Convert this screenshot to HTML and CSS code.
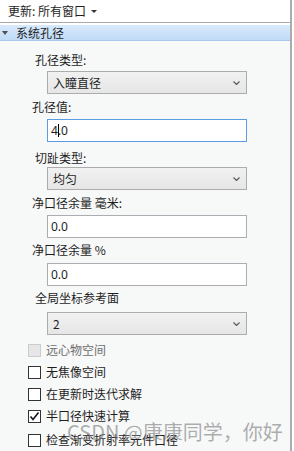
FILE: index.html
```html
<!DOCTYPE html>
<html lang="zh-CN">
<head>
<meta charset="utf-8">
<title>系统孔径</title>
<link rel="stylesheet" href="styles.css">
</head>
<body>
<div class="panel">
  <div class="topbar">
    <span class="topbar-text">更新: 所有窗口</span>
    <span class="dropdown-caret"></span>
  </div>
  <div class="section">
    <div class="section-header">
      <span class="header-tri"></span>
      <span class="header-title">系统孔径</span>
    </div>
    <div class="section-body">
      <div class="label indent">孔径类型:</div>
      <div class="field select gap-3">
        <span>入瞳直径</span>
        <svg class="chev" width="7" height="4" viewBox="0 0 7 4"><polyline points="0.5,0.5 3.5,3.5 6.5,0.5" fill="none" stroke="#5a5a5a" stroke-width="1.2"/></svg>
      </div>

      <div class="label gap-5">孔径值:</div>
      <div class="field input focused gap-4"><span>4</span><span class="cursor"></span><span>.0</span></div>

      <div class="label indent gap-8">切趾类型:</div>
      <div class="field select gap-1">
        <span>均匀</span>
        <svg class="chev" width="7" height="4" viewBox="0 0 7 4"><polyline points="0.5,0.5 3.5,3.5 6.5,0.5" fill="none" stroke="#5a5a5a" stroke-width="1.2"/></svg>
      </div>

      <div class="label gap-5">净口径余量 毫米:</div>
      <div class="field input gap-4"><span>0.0</span></div>

      <div class="label gap-4">净口径余量 %</div>
      <div class="field input gap-5"><span>0.0</span></div>

      <div class="label indent gap-4">全局坐标参考面</div>
      <div class="field select gap-6">
        <span>2</span>
        <svg class="chev" width="7" height="4" viewBox="0 0 7 4"><polyline points="0.5,0.5 3.5,3.5 6.5,0.5" fill="none" stroke="#5a5a5a" stroke-width="1.2"/></svg>
      </div>

      <div class="checks">
        <div class="check-row disabled"><span class="box"></span><span>远心物空间</span></div>
        <div class="check-row"><span class="box"></span><span>无焦像空间</span></div>
        <div class="check-row"><span class="box"></span><span>在更新时迭代求解</span></div>
        <div class="check-row"><span class="box"><svg width="11" height="11" viewBox="0 0 11 11"><polyline points="1.5,5.5 4,8.5 9.5,1.5" fill="none" stroke="#1a1a1a" stroke-width="1.7"/></svg></span><span>半口径快速计算</span></div>
        <div class="check-row last"><span class="box"></span><span>检查渐变折射率元件口径</span></div>
      </div>
    </div>
  </div>
  <div class="watermark">CSDN @康康同学，你好</div>
</div>
</body>
</html>
```
FILE: styles.css
```css
* { box-sizing: border-box; }
html, body { margin: 0; padding: 0; }
body {
  background: #ffffff;
  font-family: "Noto Sans CJK SC", "Noto Sans", sans-serif;
  font-size: 12px;
  color: #1e1e1e;
}
.panel {
  position: relative;
  width: 292px;
  height: 451px;
  border-right: 2px solid #acacac;
  background: #ffffff;
  overflow: hidden;
}
.topbar {
  height: 23px;
  background: #ffffff;
  border-bottom: 1px solid #a9a9a9;
  padding-left: 8px;
  display: flex;
  align-items: center;
  gap: 5px;
  line-height: 16px;
}
.dropdown-caret {
  width: 0;
  height: 0;
  border-left: 3px solid transparent;
  border-right: 3px solid transparent;
  border-top: 3px solid #333;
  margin-top: 1px;
}
.section { margin-top: 2px; }
.section-header {
  height: 16px;
  background: linear-gradient(#d8e9fc, #c0dbf8);
  border-bottom: 1px solid #a8c9ef;
  display: flex;
  align-items: center;
  padding-left: 2px;
  gap: 8px;
  line-height: 15px;
}
.header-tri {
  width: 0;
  height: 0;
  border-left: 3px solid transparent;
  border-right: 3px solid transparent;
  border-top: 4px solid #4f4f4f;
}
.section-body {
  background: #f7f8f8;
  padding-top: 11px;
  height: 410px;
}
.label {
  line-height: 16px;
  height: 16px;
  padding-left: 32px;
  white-space: nowrap;
}
.label.indent { padding-left: 35px; }
.field {
  margin-left: 47px;
  width: 200px;
  height: 23px;
  display: flex;
  align-items: center;
  border: 1px solid #acacac;
  font-family: "Noto Sans", "Noto Sans CJK SC", sans-serif;
}
.select {
  background: linear-gradient(#f1f1f1, #e6e6e6);
  padding-left: 5px;
  padding-right: 6px;
  justify-content: space-between;
  font-family: "Noto Sans CJK SC", "Noto Sans", sans-serif;
}
.chev { display: block; }
.input {
  background: #ffffff;
  padding-left: 3px;
  border-color: #abadb3;
}
.input.focused { border-color: #5a9de3; }
.cursor {
  display: inline-block;
  width: 1px;
  height: 13px;
  background: #000;
  margin: 0 -1px 0 0;
}
.gap-1 { margin-top: 1px; }
.gap-3 { margin-top: 3px; }
.gap-4 { margin-top: 4px; }
.gap-5 { margin-top: 5px; }
.gap-6 { margin-top: 6px; }
.gap-8 { margin-top: 8px; }
.checks { margin-top: 4px; }
.check-row {
  height: 22px;
  display: flex;
  align-items: center;
  padding-left: 28px;
  gap: 5px;
  line-height: 16px;
}
.check-row.last { margin-top: 2px; }
.box {
  width: 13px;
  height: 13px;
  border: 1px solid #333333;
  background: #ffffff;
  display: flex;
  align-items: center;
  justify-content: center;
}
.check-row.disabled { color: #6e6e6e; }
.check-row.disabled .box {
  border-color: #cccccc;
  background: #e6e6e6;
}
.watermark {
  position: absolute;
  left: 67px;
  top: 419px;
  font-size: 20px;
  line-height: 26px;
  color: rgba(120, 120, 120, 0.6);
  white-space: nowrap;
  pointer-events: none;
}
```
